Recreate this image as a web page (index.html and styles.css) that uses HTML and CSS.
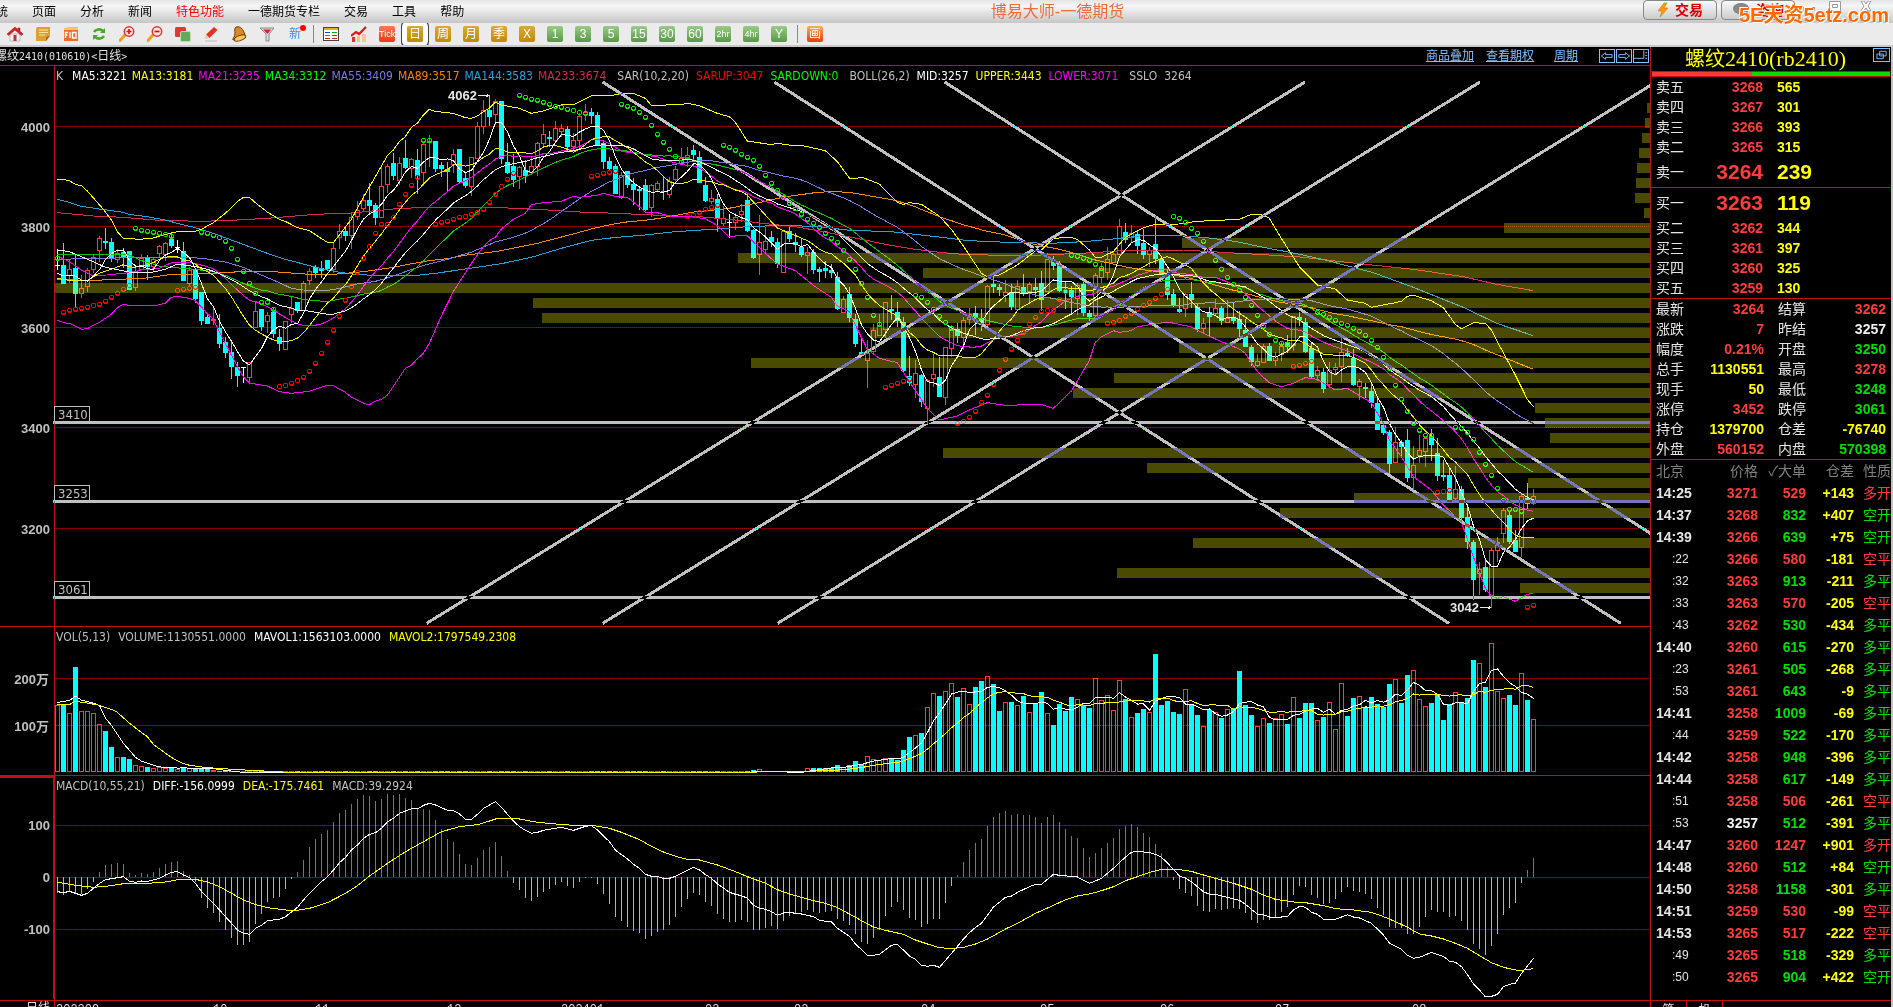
FILE: index.html
```html
<!DOCTYPE html>
<html lang="zh-CN">
<head>
<meta charset="utf-8">
<title>博易大师-一德期货</title>
<link rel="stylesheet" href="styles.css">
</head>
<body>
<header class="menubar">
  <nav class="menu">
    <a href="#">系统</a><a href="#">页面</a><a href="#">分析</a><a href="#">新闻</a><a href="#" class="hot">特色功能</a><a href="#">一德期货专栏</a><a href="#">交易</a><a href="#">工具</a><a href="#">帮助</a>
  </nav>
  <h1 class="app-title">博易大师-一德期货</h1>
  <div class="window-tools">
    <button class="pill"><svg width="12" height="16" viewBox="0 0 12 16"><path d="M7 1 1 9h4l-2 6 8-9H7l3-5z" fill="#f90" stroke="#c97a10" stroke-width=".6"/></svg>交易</button>
    <button class="pill"><svg width="18" height="16" viewBox="0 0 18 16"><path d="M9 1C4 1 1 3.500 1 6.500S4 12 8 12l4 3-1-3c3.500-.5 6-2.500 6-5.500S14 1 9 1z" fill="#888"/></svg>咨询</button>
    <svg class="winbtns" width="80" height="12" viewBox="0 0 80 12" fill="#fff" stroke="#999"><rect x="4.500" y="6.500" width="11" height="3"/><path d="M30.500.5h11v9h-11zM33.500 3.500h5v3h-5z" fill-rule="evenodd"/><path d="M62 0h3l2 3 2-3h3l-3 5 3 5h-3l-2-3-2 3h-3l3-5z"/></svg>
  </div>
  <span class="watermark">5E天资5etz.com</span>
</header>

<div class="toolbar">
  <button class="tool" aria-label="主页"><svg viewBox="0 0 16 16"><path d="M3 8h10v7H3z" fill="#f4f4f4" stroke="#999" stroke-width=".6"/><path d="M8 1 0 8l1.500 1.500L8 4l6.500 5.500L16 8l-3-2.700V2h-2v1.500z" fill="#d22" stroke="#811" stroke-width=".5"/><path d="M6.500 9h3v6h-3z" fill="#b33"/></svg></button>
  <button class="tool" aria-label="公告"><svg viewBox="0 0 16 16"><path d="M2 1h13v9l-4 5H1V3z" fill="#e0a030"/><path d="M11 15v-4l4-1z" fill="#a86a10"/><path d="M4 4h9M4 6.500h9M4 9h6" stroke="#fbe3ae"/></svg></button>
  <button class="tool" aria-label="F10"><svg viewBox="0 0 16 16"><path d="M1 2l14-1v14H1z" fill="#f06a28"/><path d="M1 2l14-1v3H1z" fill="#f7c27a"/><path d="M2.500 12V6.500H5M2.500 9h2M7 6v6M9.500 6.500h3.500v5.500H9.500z" fill="none" stroke="#fff" stroke-width="1.400"/></svg></button>
  <button class="tool" aria-label="刷新"><svg viewBox="0 0 16 16" fill="none" stroke="#4aa62c" stroke-width="2.600"><path d="M3 6c2-3 6-3.500 9-1M13 10c-2 3-6 3.500-9 1"/><path d="M14 2v5H9zM2 14V9h5z" fill="#4aa62c" stroke="none"/></svg></button>
  <button class="tool" aria-label="放大"><svg viewBox="0 0 16 16"><path d="M1 14.500 6 9" stroke="#f0a020" stroke-width="3" stroke-linecap="round"/><circle cx="10" cy="5.500" r="4.700" fill="#ffe6e6" stroke="#d33" stroke-width="1.500"/><path d="M7.500 5.500h5M10 3v5" stroke="#d11" stroke-width="1.700"/></svg></button>
  <button class="tool" aria-label="缩小"><svg viewBox="0 0 16 16"><path d="M1 14.500 6 9" stroke="#f0a020" stroke-width="3" stroke-linecap="round"/><circle cx="10" cy="5.500" r="4.700" fill="#ffe6e6" stroke="#d33" stroke-width="1.500"/><path d="M7.500 5.500h5" stroke="#d11" stroke-width="1.700"/></svg></button>
  <button class="tool" aria-label="叠加"><svg viewBox="0 0 16 16"><rect x="0" y="1" width="11" height="10" rx="1.500" fill="#dc3a30"/><rect x="5.500" y="5.500" width="10" height="10" rx="1.500" fill="#62ab5a" stroke="#b9dcb4"/></svg></button>
  <button class="tool" aria-label="画线"><svg viewBox="0 0 16 16"><path d="M3 8.500 11 1l3.500 3L6.500 12z" fill="#e63222"/><path d="M3 8.500 6.500 12 1.500 13z" fill="#f2c79a"/><path d="M2 15h12" stroke="#bbb"/></svg></button>
  <button class="tool" aria-label="预警"><svg viewBox="0 0 16 16"><path d="M5 1c5-1 7 2 9 8L2 14c-1-1 2-3 2-7 0-2-1-4 1-6z" fill="#d9892b" stroke="#6e3a0a"/><ellipse cx="9" cy="12" rx="6" ry="2.500" transform="rotate(-20 9 12)" fill="#f7c94e" stroke="#6e3a0a"/></svg></button>
  <button class="tool" aria-label="筛选"><svg viewBox="0 0 16 16"><path d="M1 2h14l-5 6v7H7V8z" fill="#ddd" stroke="#888"/><path d="M4 3.500h8L9 7.500H8z" fill="#e01f2c"/></svg></button>
  <button class="tool news">新</button>
  <span class="sep"></span>
  <button class="tool" aria-label="报价"><svg viewBox="0 0 16 16"><rect x=".5" y="1.500" width="15" height="13" fill="#fff" stroke="#444"/><path d="M1 3h14" stroke="#e8b020" stroke-width="2"/><path d="M2 6.500h5" stroke="#15a" /><path d="M9 6.500h5M2 9.500h5" stroke="#1a1"/><path d="M9 9.500h5M2 12.500h5M9 12.500h5" stroke="#c22"/></svg></button>
  <button class="tool" aria-label="走势"><svg viewBox="0 0 16 16"><path d="M1 11h3v5H1z" fill="#d33"/><path d="M6 10h3v6H6z" fill="#e8d070"/><path d="M11 8h4v8h-4z" fill="#f0c8a0"/><path d="M0 10l5-4 3 2 7-7" stroke="#e01818" stroke-width="2.200" fill="none"/></svg></button>
  <button class="tool key k-red">Tick</button>
  <button class="tool key k-gold on">日</button>
  <button class="tool key k-gold">周</button>
  <button class="tool key k-gold">月</button>
  <button class="tool key k-gold">季</button>
  <button class="tool key k-gold">X</button>
  <button class="tool key k-green">1</button>
  <button class="tool key k-green">3</button>
  <button class="tool key k-green">5</button>
  <button class="tool key k-green">15</button>
  <button class="tool key k-green">30</button>
  <button class="tool key k-green">60</button>
  <button class="tool key k-green small">2hr</button>
  <button class="tool key k-green small">4hr</button>
  <button class="tool key k-green">Y</button>
  <span class="sep"></span>
  <button class="tool key k-orange">画</button>
</div>

<main class="workspace">
  <section class="charts">
    <div class="chart-head">
      <h2 class="contract">螺纹<span class="mono">2410(010610)&lt;</span>日线<span class="mono">&gt;</span></h2>
      <a href="#">商品叠加</a><a href="#">查看期权</a><a href="#" class="gap">周期</a>
      <div class="navs">
        <button aria-label="向左"><svg viewBox="0 0 15 12"><path d="M1.500 6 6 2.500v2h7v3H6v2z"/></svg></button>
        <button aria-label="向右"><svg viewBox="0 0 15 12"><path d="M13.500 6 9 2.500v2H2v3h7v2z"/></svg></button>
        <button aria-label="分栏"><svg viewBox="0 0 15 12"><path d="M0 8.500h10.500V0M12 2.500h2M12 5.500h2M12 8.500h2"/></svg></button>
      </div>
    </div>
    <div class="panel price">
      <svg id="price"></svg>
      <p class="legend"><span>K</span><span class="white l2">MA5:3221</span><span class="yellow">MA13:3181</span><span class="magenta">MA21:3235</span><span class="green">MA34:3312</span><span class="blue">MA55:3409</span><span class="orange">MA89:3517</span><span class="sky">MA144:3583</span><span class="crimson">MA233:3674</span><span class="l2">SAR(10,2,20)</span><span class="red">SARUP:3047</span><span class="green">SARDOWN:0</span><span class="l2">BOLL(26,2)</span><span class="white">MID:3257</span><span class="yellow">UPPER:3443</span><span class="magenta">LOWER:3071</span><span class="l2">SSLO</span><span>3264</span></p>
    </div>
    <div class="panel">
      <svg id="volume"></svg>
      <p class="legend"><span>VOL(5,13)</span><span>VOLUME:1130551.0000</span><span class="white">MAVOL1:1563103.0000</span><span class="yellow">MAVOL2:1797549.2308</span></p>
    </div>
    <div class="panel">
      <svg id="macd"></svg>
      <p class="legend"><span>MACD(10,55,21)</span><span class="white">DIFF:-156.0999</span><span class="yellow">DEA:-175.7461</span><span>MACD:39.2924</span></p>
    </div>
    <div class="panel"><svg id="dates"></svg></div>
  </section>

  <aside class="quote">
    <header class="quote-head"><h2>螺纹<span>2410(rb2410)</span></h2>
      <button aria-label="还原"><svg viewBox="0 0 15 13"><path d="M5.500 2.500h7v5h-7zM2.500 5.500h7v5h-7z"/></svg></button>
    </header>
    <div class="ratio"><i></i></div>
    <table class="book" id="asks"></table>
    <table class="book" id="bids"></table>
    <table class="stats" id="stats"></table>
    <table class="ticks"><thead><tr><th class="t">北京</th><th>价格</th><th>✓大单</th><th>仓差</th><th>性质</th></tr></thead><tbody id="ticks"></tbody></table>
    <div class="tabs"><button>笔</button><button>机</button></div>
  </aside>
</main>
<script src="chart.js"></script>
</body>
</html>
```
FILE: styles.css
```css
* { box-sizing: border-box; }
:root {
  --line: #c01010;
  --cjk: "Liberation Sans", "Noto Sans CJK SC", sans-serif;
}
body {
  margin: 0;
  height: 100vh;
  overflow: hidden;
  display: flex;
  flex-direction: column;
  background: #000;
  color: #c0c0c0;
  font: 12px/16px var(--cjk);
}
button { border: 0; padding: 0; margin: 0; background: none; color: inherit; font: inherit; }
h1, h2, p { margin: 0; font-weight: normal; }
table { border-collapse: collapse; width: 100%; table-layout: fixed; }
td, th { padding: 0; font-weight: normal; white-space: nowrap; }
a { color: inherit; }

.menubar {
  position: relative;
  flex: none;
  height: 23px;
  display: grid;
  grid-template-columns: 1fr auto 1fr;
  align-items: center;
  background: linear-gradient(#e4e4e4, #f6f6f6 25%, #e0e0e0 60%, #c6c6c6);
  color: #000;
}
.menu { display: flex; gap: 24px; margin-left: -16px; }
.menu a { text-decoration: none; white-space: nowrap; }
.menu .hot { color: #f00; }
.app-title { color: #f26a3c; font-size: 16px; padding-left: 222px; }
.window-tools { display: flex; justify-content: flex-end; gap: 4px; align-self: start; }
.pill {
  display: flex; align-items: center; justify-content: center; gap: 6px;
  width: 74px; height: 20px;
  border: 1px solid #888; border-radius: 4px;
  background: linear-gradient(#fafafa, #ccc);
  color: #d00; font-size: 14px; font-weight: bold;
}
.winbtns { margin: 1px 14px 0 0; }
.watermark {
  position: absolute; right: 4px; top: 3px;
  font-size: 20px; line-height: 24px; font-weight: bold; color: #ff6a00;
  text-shadow: 1px 1px 0 #fff, -1px -1px 0 #fff;
}

.toolbar {
  flex: none;
  height: 24px;
  display: flex;
  align-items: center;
  gap: 12px;
  padding-left: 7px;
  background: #ebebeb;
  border-bottom: 2px solid #c8c8c8;
}
.tool { width: 16px; height: 16px; flex: none; }
.tool svg { display: block; width: 16px; height: 16px; }
.news { position: relative; color: #3a8ee6; font-size: 12px; }
.news::after { content: ""; position: absolute; right: -3px; top: -1px; width: 6px; height: 6px; border-radius: 50%; background: #f00; }
.sep { width: 1px; height: 18px; background: #888; margin: 0 -3px 0 -2px; }
.key { border-radius: 2px; color: #fff; font-size: 12px; line-height: 16px; }
.k-gold { background: linear-gradient(#dca83c, #c08c00); }
.k-green { background: linear-gradient(#98cc84, #589848); }
.k-orange { background: linear-gradient(#ffb050, #e83818); }
.k-red { background: linear-gradient(#ff7a50, #e83a18); font-size: 9px; }
.small { font-size: 9px; }
.on { box-shadow: 0 0 0 5px #fff, 0 0 0 6px #444; clip-path: inset(-3px -6px); }

.workspace { flex: 1; min-height: 0; display: grid; grid-template-columns: minmax(0, 1fr) 243px; }
.charts { min-height: 0; display: grid; grid-template-rows: 18px 561fr 149fr 225fr 7px; }
.chart-head { display: flex; align-items: center; gap: 12px; color: #80c0ff; }
.contract { flex: 1; font-size: 12px; color: #e0e0e0; margin-left: -5px; }
.mono { font: 10px "DejaVu Sans Mono", monospace; }
.chart-head .gap { margin: 0 9px 0 8px; }
.navs { display: flex; gap: 1px; margin-right: 1px; }
.navs button { width: 16px; height: 14px; border: 1px solid #80c0ff; }
.navs svg, .quote-head svg { display: block; width: 100%; height: 100%; fill: none; stroke: #80c0ff; }

.panel { min-height: 0; display: grid; grid-template: minmax(0, 1fr) / minmax(0, 1fr); border-top: 1px solid var(--line); overflow: hidden; }
.panel > * { grid-area: 1 / 1; }
.panel svg { width: 100%; height: 100%; display: block; }
.legend {
  align-self: start; display: flex; gap: 8px; padding: 2px 0 0 56px;
  font: 12px/16px "DejaVu Sans Condensed", "DejaVu Sans", sans-serif; white-space: nowrap;
}
.price .legend { gap: 5px; }
.l2 { margin-left: 4px; }
.crimson ~ span { margin-left: 2px; }
.crimson ~ .l2 { margin-left: 6px; }
.white { color: #fff; }
.yellow { color: #ff0; }
.magenta { color: #f0f; }
.green { color: #0f0; }
.blue { color: #7878e8; }
.orange { color: #ff8000; }
.sky { color: #28a0dc; }
.crimson { color: #dc2850; }
.red { color: #f00; }
.panel text { font: 13px "DejaVu Sans Condensed", sans-serif; fill: #c0c0c0; }
.panel text.b { font: bold 13px "Liberation Sans", "Noto Sans CJK SC", sans-serif; }
.panel text.peak { fill: #e8e8e8; }
.panel text.date { font: 12px "Liberation Mono", "Noto Sans CJK SC", monospace; fill: #e0e0e0; }

.quote { border-left: 1px solid var(--line); border-right: 2px solid #c8c0c0; display: flex; flex-direction: column; min-height: 0; overflow: hidden; color: #e4e4e4; font-size: 14px; line-height: 20px; }
.quote-head { height: 24px; display: flex; align-items: center; color: #ff0; }
.quote-head h2 { flex: 1; padding-left: 34px; font-size: 20px; line-height: 24px; }
.quote-head h2 span { font: 22px/24px "Liberation Serif", serif; }
.quote-head button { width: 17px; height: 14px; margin: 0 1px 8px 0; border: 1px solid #80c0ff; }
.ratio { flex: none; height: 6px; border: solid var(--line); border-width: 1px 0; padding: 0 1px; background: #00dc00; background-clip: content-box; }
.ratio i { display: block; height: 4px; width: 42%; background: #ff3838; }
.book, .stats { border-bottom: 1px solid var(--line); flex: none; }
tr { height: 20px; }
tr.big { height: 30px; }
td:first-child { padding-left: 5px; width: 38px; }
.n { text-align: right; font-weight: bold; }
.book .n { width: 74px; }
.book .v { padding-left: 14px; font-weight: bold; }
.big .n, .big .v { font-size: 21px; }
.stats td.n { width: 75px; }
.stats td.m { padding-left: 14px; width: 48px; }
.stats td.n:last-child { width: auto; padding-right: 5px; }
.r { color: #ff3c3c; }
.g { color: #00e000; }
.y { color: #ff0; }
.w { color: #f0f0f0; }
.ticks { flex: none; }
.ticks th { text-align: right; color: #808080; height: 22px; }
.ticks th.t { text-align: left; padding-left: 5px; width: 47px; }
.ticks th:nth-child(2) { width: 60px; }
.ticks th:nth-child(3), .ticks th:nth-child(4) { width: 48px; }
.ticks tbody tr { height: 22px; }
.ticks td.t { font-weight: bold; }
.ticks td.s { font-size: 12px; padding-left: 21px; }
.ticks td:last-child { text-align: right; }
.tabs { margin-top: auto; flex: none; height: 7px; border-top: 1px solid var(--line); display: flex; overflow: hidden; font-size: 12px; line-height: 16px; }
.tabs button { width: 36px; height: 18px; border-right: 1px solid var(--line); }
```
FILE: chart.js
```js
// Geometry is kept in thirds of a pixel; one bar every 18 units.
const U = 3, STEP = 18, X0 = 172.5;
const bx = i => X0 + STEP * i;

// candle = direction, high, open/close top, open/close bottom, low
const candleTiles = [
 [0, `w568-616-616-630 d549-615-671-671 u598-628-645-669 d585-624-702-742 u645-685-700-713 u625-631-680-695 u585-592-628-640 u528-535-571-605 d504-543-548-566 d535-546-597-605 u568-580-598-608 d565-576-590-624 d573-573-690-690 u625-635-682-692 u583-595-628-628 d585-594-622-660 u590-597-620-635 u555-559-580-590 u545-550-583-602 d520-537-557-563 w541-562-562-578 d546-573-662-662 u620-631-670-680 d625-631-717-728 d697-697-782-795 d765-771-791-791 u738-778-781-795 d762-803-851-863 d832-846-878-893 d845-876-920-957 d905-921-947-980 w922-922-922-968 u906-906-951-968 u725-754-802-802 d747-747-800-812 u755-766-784-820 d740-755-821-833 d806-831-851-872 u784-784-868-868 u710-745-763-790 d726-726-752-758 u663-670-750-750 u625-634-661-675 d615-622-640-655 d603-625-632-653 d600-600-628-634 u547-565-628-638 u492-514-532-567 d500-513-528-543 u460-472-526-567 u424-452-470-480 u403-421-445-455 d370-420-437-463 d428-436-473-495 u318-379-472-472 u312-319-373-400 d280-309-347-360 u291-310-362-375 d240-294-323-328 u295-298-325-353 d267-300-347-402 u247-253-337-377 u225-243-248-320 d243-243-326-335 d305-315-327-350 d307-328-335-393 u268-283-312-340 d267-267-366-368 d335-354-377-383 u292-292-379-407 u186-199-295-295 u120-151-199-221 d105-150-170-198 u118-124-163-195 d123-123-297-312 d250-307-339-343 d282-318-359-380 u318-322-350-386 d300-331-347-369 u292-319-337-345 u245-250-320-348 u192-223-250-262 d212-231-236-262 u183-205-241-247 u192-205-214-230 d198-207-261-272 u220-241-259-270 u160-169-241-267 u131-158-162-183 d144-156-167-193 d156-165-255-258 d245-248-305-327 d291-303-327-332 d312-318-402-402 u336-346-412-418 d333-333-376-383 d355-372-390-434 d377-388-392-450 d357-375-450-453 u372-376-442-470 u362-370-388-395 d350-393-396-420 u352-364-402-413 u318-328-358-364 u264-295-300-312 u262-286-291-320 d255-270-285-300 d273-291-369-369 d350-375-423-426 u390-415-423-432 d403-416-478-516 u438-475-490-498 w462-485-485-534 u460-472-486-511 u433-454-463-485 d400-420-513-517 d508-511-594-597 u465-547-583-645 u502-544-569-580 d513-531-546-560 d535-545-611-623 u513-513-637-637 d498-513-537-547 d520-546-554-576 d535-562-584-592 u560-577-586-642 d566-577-629-641 d622-627-636-666 d603-625-633-655 d612-630-639-655 d636-651-746-750 u708-718-758-758 d682-703-773-785 d762-777-851-860 d835-877-886-886 u840-880-901-983 u793-810-875-885 u763-797-827-827 u727-727-808-835 d705-747-752-780 d726-756-782-800 d770-786-932-935`],
 [300, `d588-648-668-677 u600-640-673-713 d641-645-727-740 u656-661-745-793 u582-643-656-680 d591-651-711-711 u562-562-712-735 u495-508-565-592 d490-507-527-548 u472-481-532-570 u445-462-478-495 d438-459-475-525 d447-475-492-512 u374-379-493-497 d348-372-380-400 d372-381-389-408 u360-396-407-425 d373-397-441-451 u360-379-448-448 d342-381-402-408 u365-373-394-433 d353-381-389-410 d333-369-420-453 u279-298-394-394 d288-303-318-330 d302-315-393-395 d364-390-400-447 d378-390-411-462 u370-375-415-466 d363-373-459-467 d450-460-470-485 u340-346-466-470 u310-326-352-368 u261-298-337-360 u275-283-307-310 u177-198-283-283 d189-216-240-250 u194-220-233-248 d210-222-258-283 d207-249-285-297 u262-270-283-320 d168-252-297-313 d290-297-345-345 d330-345-405-420 d388-402-435-440 d413-447-456-458 u400-403-445-470 d367-402-420-443 d430-441-507-516 u475-490-506-518 d442-456-471-528 u418-445-460-465 d438-444-483-495 u420-475-487-487 d430-474-483-493 d453-477-507-537 d478-510-560-560 d556-561-605-617 u583-604-617-620 u552-559-608-608 d550-558-602-602 u575-588-601-618 u545-558-582-603 d525-545-560-578 u470-470-556-572 d457-471-479-498 d475-486-576-579 d550-564-650-654 u618-631-645-663 d625-636-686-698 u605-632-674-685 u608-622-629-645 u533-577-620-665 d565-578-586-592 d568-594-675-677 u657-664-680-720 d670-682-686-715 d670-694-728-743`],
 [600, `d412-430-510-510 d485-496-519-526 d510-516-612-643 u500-547-608-608 d540-546-560-595 d508-540-653-665 u558-616-653-690 u525-571-586-608 u530-535-574-620 d507-527-555-602 d535-580-648-662 d600-646-651-663 d620-645-726-726 u618-688-716-720 d678-687-773-783 d735-771-845-867 d840-846-960-1020 u905-928-941-1005 d900-922-990-995 u865-871-1006-1043 u832-847-872-905 u743-751-821-848 d755-765-846-853 d810-840-876-876 u700-709-862-890 d668-714-731-747 u687-709-731-735`]
];
const candles = candleTiles.flatMap(([dy, s]) => s.split(" ").map(t => {
  const [h, a, b, l] = t.slice(1).split("-").map(n => +n + dy);
  return { d: t[0], h, a, b, l, c: t[0] === "u" ? a : t[0] === "d" ? b : a };
}));
const closes = candles.map(c => c.c);

const sma = (v, n) => v.map((_, i) => i < n - 1 ? null : v.slice(i - n + 1, i + 1).reduce((s, x) => s + x, 0) / n);
const line = (head, vals, color) =>
  `<polyline points="${head} ${vals.map((v, i) => v === null ? "" : `${bx(i)},${v.toFixed(1)}`).join(" ")}" stroke="${color}"/>`;

const upper = "172,360 190,358 208,362 228,374 245,377 262,393 310,448 334,480 352,515 370,535 420,538 460,534 496,523 532,515 586,514 604,508 640,488 676,460 712,425 730,412 748,412 766,428 802,456 838,478 856,484 892,503 928,512 982,547 1000,548 1018,525 1054,478 1090,412 1126,350 1162,287 1180,270 1198,245 1216,230 1234,202 1252,190 1270,165 1288,148 1306,154 1360,160 1396,173 1414,175 1432,168 1450,155 1468,145 1486,127 1504,135 1558,145 1594,160 1630,153 1684,135 1720,134 1774,107 1830,107 1864,102 1900,100 1936,115 1954,136 2044,134 2062,130 2098,137 2152,160 2188,170 2206,187 2242,243 2314,254 2332,250 2386,258 2404,256 2440,264 2476,272 2512,305 2548,354 2566,357 2584,351 2638,372 2692,427 2710,433 2728,428 2764,433 2818,468 2854,508 2890,558 2944,640 2962,650 2998,645 3052,615 3106,573 3124,570 3160,535 3214,532 3232,538 3268,570 3286,592 3304,592 3340,575 3376,532 3430,503 3466,493 3538,492 3590,484 3718,478 3754,463 3790,465 3808,475 3844,535 3898,620 3952,675 4006,687 4042,720 4096,730 4114,742 4186,728 4204,724 4222,709 4240,706 4294,722 4330,743 4366,793 4384,806 4420,788 4456,790 4474,810 4492,845 4546,945 4582,1018 4600,1040";
const lower = "172,781 190,788 208,790 226,798 244,808 262,806 280,796 298,787 334,763 352,743 370,733 388,736 470,736 496,730 514,712 532,709 568,715 586,722 604,740 622,762 640,778 658,815 676,850 694,885 712,920 730,950 748,969 802,978 838,995 874,1000 928,994 982,976 1000,976 1018,988 1036,997 1054,1012 1090,1030 1108,1034 1126,1024 1144,1018 1162,1006 1216,925 1234,916 1252,896 1270,880 1288,850 1324,768 1360,695 1414,610 1450,560 1468,542 1486,532 1504,507 1540,478 1576,460 1594,434 1630,428 1684,424 1720,409 1738,412 1792,406 1810,400 1846,409 1882,412 1918,440 1936,457 1972,458 2008,468 2062,469 2116,476 2152,497 2188,531 2224,525 2242,527 2260,545 2296,580 2332,612 2386,632 2440,676 2494,712 2512,738 2548,755 2566,795 2602,868 2638,895 2692,908 2728,965 2782,1045 2818,1080 2872,1068 2908,1050 2962,1028 3016,1036 3124,1033 3160,1045 3214,993 3268,902 3286,847 3304,830 3340,812 3358,817 3394,812 3412,800 3502,786 3538,793 3574,801 3610,820 3664,845 3718,867 3736,880 3772,935 3808,968 3844,980 3880,970 3916,953 3952,958 4006,990 4042,985 4114,1028 4150,1090 4168,1140 4204,1190 4240,1250 4294,1290 4330,1335 4384,1385 4420,1490 4456,1585 4474,1608 4492,1615 4510,1610 4546,1624 4582,1603 4600,1600";
const lines = [
  line("172,458 280,468 370,472 478,481 604,484 694,481 800,475 946,463 1054,459 1180,447 1270,442 1480,442 1610,448 1740,456 1850,460 1936,464 2026,468 2110,471 2206,480 2296,491 2386,500 2476,516 2566,534 2656,553 2746,568 2818,577 2890,583 3000,586 3130,585 3280,578 3400,570 3550,570 3650,576 3790,584 3900,591 4050,608 4240,628 4390,650 4490,673 4600,692", [], "#dc2850"),
  line("172,418 208,427 244,439 298,447 370,457 388,463 440,470 496,480 532,490 586,503 640,520 694,540 748,560 802,580 856,598 910,612 960,625 1018,637 1072,644 1126,646 1252,646 1306,640 1410,625 1504,611 1594,592 1684,565 1774,541 1840,533 1936,525 2026,515 2152,507 2242,500 2350,496 2458,500 2548,511 2674,515 2818,531 2890,540 2960,545 3150,550 3250,545 3350,536 3430,527 3540,527 3620,533 3710,545 3790,562 3900,583 3975,600 4120,638 4240,682 4390,742 4490,790 4600,827", [], "#28a0dc"),
  line("172,658 262,662 352,658 430,655 500,645 640,640 720,635 820,635 928,643 1000,643 1072,637 1126,630 1180,622 1230,612 1288,602 1342,596 1400,585 1486,575 1612,550 1700,527 1745,515", sma(closes, 89), "#f80"),
  line("172,600 240,595 568,592 622,597 676,606 730,622 784,645 838,668 874,685 910,690 980,692 1018,685 1072,672 1126,664", sma(closes, 55), "#7878e8"),
  line("172,585 244,583 388,585 424,602 478,618 514,622 586,628 640,635 680,648 730,670", sma(closes, 34), "#0c0"),
  line("172,588 208,605 244,630 280,648 320,645 388,638 424,630 478,625 514,608", sma(closes, 21), "#f0f"),
  line("172,655 200,660 262,662 298,640 334,628 370,614", sma(closes, 13), "#ee0"),
  line(upper, [], "#ff0"),
  line(lower, [], "#f0f"),
  line("172,570 208,575 244,590 280,605 316,622 388,636 460,636 496,628 532,612 586,620", sma(closes, 26), "#eee"),
  line("172,640 190,648 208,645 226,648", sma(closes, 5), "#fff")
].join("");

const sar = [
 ["g",0,"595"],["r",1,"757,751,748,745,742,737,733,724,712,700,688,677"],["g",13,"505,511,514,517,520,524,529"],["r",20,"692,688,685,682"],
 ["g",24,"517,520,526,533,544,565,598,634,670,700,727,727,748"],["r",37,"980,977,970,962,952,934,910,880,847,811,769,721,680,637,595,560,520,493,493,472,433,403,376,352"],
 ["g",61,"241,241"],["r",63,"493,487,484,478,472,470,463,457,448,427,403,380,358,340"],["g",77,"106,112,118,121,127,133,139,142,148,152,158,160"],
 ["r",89,"349,346,340,337,334"],["g",94,"133,139,145,157,172,196,223,247,268,290,306"],["r",105,"469,467,457,448,442,436"],
 ["g",111,"256,262,271,283,292,301,319,346,370,391,412,430,447,463,478,490,502,520,535,547,571,598,628,670,712,766,793"],["r",138,"982,976,970,964,958"],
 ["g",143,"706,712,727,748,769,787,805"],["r",150,"1090,1085,1072,1054,1027,1006,973,931,898,868,841,817,793,772,754,752,751,718,695"],
 ["g",169,"586,589,595,601,613,625"],["r",175,"790,787,782,769,760,748,736,727,715,703,688"],
 ["g",186,"470,475,487,505,520,544,571,601,628,652,673,691,712,736,766,799,823,841,850,853"],["r",206,"919,916,910,904"],
 ["g",210,"757,763,772,781,790,796,805,814,826,841,862,892,925,976,1018,1054,1090,1111,1126,1126"],["r",230,"1297,1295,1291"],
 ["g",233,"1102,1105,1117,1138,1177,1213,1246,1285,1321,1348,1348,1354"],["r",245,"1642,1636"]
].map(([c, i0, s]) => s.split(",").map((y, k) => `<circle cx="${bx(i0 + k)}" cy="${y}" r="6" stroke="${c === "g" ? "#0e0" : "#f00"}"/>`).join("")).join("");

const candleMarks = candles.map((c, i) => {
  const x = bx(i);
  if (c.d === "w") return `<path d="M${x} ${c.h}V${c.l}M${x - 7.5} ${c.a + 1}h15" stroke="#fff"/>`;
  if (c.d === "d") return `<path d="M${x} ${c.h}V${c.l}" stroke="#0ff"/><rect x="${x - 7.5}" y="${c.a}" width="15" height="${Math.max(3, c.b - c.a)}" fill="#0ff"/>`;
  return `<path d="M${x} ${c.h}V${c.a}M${x} ${c.b}V${c.l}M${x - 6} ${c.a}h12V${c.b}h-12z" stroke="#ff3c3c"/>`;
}).join("");

// volume profile: top, left edge
const profile = [[129,4941],[174,4935],[219,4926],[264,4917],[309,4911],[354,4908],[399,4905],[444,4932],[489,4512],[534,3546],[579,2214],[624,2769],[669,165],[714,1599],[759,1626],[804,2610],[849,3537],[894,2253],[939,3342],[984,3219],[1029,4605],[1074,4635],[1119,4650],[1164,2829],[1209,3441],[1254,4584],[1299,4062],[1344,3840],[1434,3578],[1524,3350],[1569,4560]]
  .map(([y, x]) => `<rect x="${x}" y="${y}" width="${4950 - x}" height="30"/>`).join("");

const trends = [[1808,66,4347,1690],[2323,66,4862,1690],[2834,66,5373,1690],[1280,1690,3915,66],[1808,1690,4440,66],[2333,1690,4968,66],
  [160,1087.5,4950,1087.5],[160,1324.5,4950,1324.5],[160,1612.5,4950,1612.5]]
  .map(([a, b, c, d]) => `<path class="trend" d="M${a} ${b}L${c} ${d}" style="mix-blend-mode:difference"/>`).join("");

// volume bar tops; baseline 455
const volTops = "254 254 280 141 274 274 280 313 333 381 412 412 418 436 439 441 445 442 443 443 448 443 444 443 447 446 449".split(" ").map(Number);
while (volTops.length < 116) volTops.push(453);
volTops.push(...`450 446 452 452 452 452 452 452 452 443 444 444 444 444 435 442 435 423 432 409 418 421 413 414 419 390 351 346 339 260 218 228 214 190 231 203 253 201 183 169 192 273 247 246 256 228 277 250 216 280 316 252 273 231 236 255 263 175 240 224 271 181 238 292 279 267 277 102 255 243 276 282 206 254 285 319 270 277 294 266 265 153 255 285 317 293 310 294 282 312 230 294 250 250 301 291 245 328 190 289 234 229 262 231 252 260 192 178 250 166 151 236 257 249 222 300 252 217 250 234 121 130 201 70 213 233 225 255 160 240 298`.split(" ").map(Number));
const volBars = volTops.map((y, i) => {
  const x = bx(i), down = candles[i] && candles[i].d === "d";
  if (y > 451) return `<rect x="${x - 7.5}" y="453" width="15" height="3" fill="${down ? "#0ff" : "#ff3c3c"}"/>`;
  return down ? `<rect x="${x - 7.5}" y="${y}" width="15" height="${456 - y}" fill="#0ff"/>`
    : `<path d="M${x - 6} ${y + 1}h12V454.500h-12z" stroke="#ff3c3c"/>`;
}).join("");
const volValues = volTops.map(y => y > 451 ? 457 : y);
const volLines = line("172,248 190,244 208,242 226,228", sma(volValues, 5), "#fff")
  + line("172,254 208,254 226,244 262,249 298,256 334,268 352,277", sma(volValues, 13), "#ff0");

// MACD histogram tips; zero line at 772
const hist = `819 824 815 820 822 807 786 756 735 732 729 732 759 765 759 762 756 744 732 726 723 753 766 786 834 863 879 906 930 954 975 975 966 912 882 846 833 831 807 777 756 720 681 657 642 630 606 579 570 552 537 525 528 543 537 522 525 522 533 541 567 567 570 600 627 657 666 702 732 735 714 690 681 666 708 753 789 810 833 843 831 816 807 795 786 798 804 786 774 774 791 822 852 890 903 921 933 939 957 948 936 930 915 890 861 837 819 826 846 858 882 896 905 905 899 905 930 930 924 917 927 903 888 878 876 870 876 879 876 873 896 903 915 942 965 971 953 930 888 860 846 869 893 900 920 911 896 896 849 797 766 726 690 669 657 618 591 579 573 585 582 585 585 591 609 591 585 606 627 648 654 684 711 699 684 669 654 627 618 612 621 639 651 672 699 740 780 807 819 828 858 873 876 867 870 867 863 867 879 900 909 901 899 890 876 860 825 797 801 825 833 852 849 837 816 801 812 817 822 836 864 885 921 923 924 942 942 921 890 870 876 876 890 887 903 930 971 986 1004 978 942 884 864 849 789 750 714`.split(" ")
  .map((y, i) => `<path d="M${bx(i)} 772V${y}" stroke="${y < 772 ? "#ff3c3c" : "#0ff"}"/>`).join("");
const curve = (s, c) => `<polyline stroke="${c}" points="${s.split(" ").map(p => { const [i, y] = p.split(","); return bx(+i) + "," + y; }).join(" ")}"/>`;
const diff = curve("0,815 1,818 2,814 4,826 5,820 7,790 8,779 11,770 12,784 13,787 14,783 15,784 17,775 18,765 19,757 20,755 21,765 22,773 23,790 24,815 26,850 28,890 30,930 31,940 32,943 33,925 34,916 35,902 37,898 38,890 40,862 41,840 42,820 44,785 45,770 46,750 47,728 48,712 49,690 50,675 51,655 52,643 53,638 54,625 55,605 56,595 57,580 59,566 60,567 61,556 62,550 63,555 65,571 66,572 67,582 68,598 69,598 70,583 71,565 73,545 74,562 75,583 76,603 77,620 78,631 79,640 80,637 81,631 84,622 86,631 88,619 89,617 90,630 91,648 92,665 93,691 95,717 96,733 97,745 98,763 99,769 100,770 101,775 102,775 103,769 105,751 106,742 107,750 108,764 109,775 110,792 111,804 112,817 113,823 114,827 115,835 116,856 117,865 118,868 119,875 120,886 121,879 122,877 123,880 124,882 126,890 127,901 129,906 130,925 132,949 133,972 135,1006 136,1006 137,1003 138,989 139,976 140,973 142,1008 143,1018 144,1036 145,1039 146,1036 147,1042 149,1000 151,957 152,938 153,922 154,910 156,861 158,832 159,828 160,817 162,800 163,793 164,793 166,763 167,766 170,771 171,781 172,790 174,775 176,745 178,711 179,697 180,694 182,698 183,703 184,712 185,729 187,768 188,775 189,785 191,815 192,823 193,823 195,832 197,841 198,853 200,883 201,884 202,891 204,891 205,889 206,870 207,859 208,862 209,877 210,883 211,898 213,898 215,884 216,891 217,894 219,910 221,945 222,970 224,988 225,1006 226,1015 227,1012 229,997 230,1004 231,1009 232,1024 233,1027 234,1040 235,1064 236,1092 237,1110 238,1131 239,1129 240,1123 241,1100 242,1093 243,1089 244,1060 245,1038 246,1015", "#fff");
const dea = curve("0,787 2,793 4,798 6,802 9,797 11,791 15,790 18,786 20,779 23,778 25,786 27,800 29,820 31,840 33,854 35,863 38,870 40,871 42,865 45,848 48,820 50,797 52,768 55,730 58,695 61,665 64,635 67,620 70,614 72,603 73,597 75,595 77,597 80,607 83,612 86,616 89,616 92,625 94,637 97,659 99,679 101,696 103,709 105,718 107,720 110,735 113,755 115,770 118,790 120,809 122,822 124,832 126,842 128,850 130,863 132,882 134,902 136,921 138,931 141,943 143,960 145,972 147,983 149,986 151,982 153,972 155,957 158,927 160,910 163,880 166,856 168,839 170,828 172,822 174,812 176,800 178,782 180,770 182,757 184,748 187,749 189,754 190,760 193,775 196,790 199,808 201,825 203,838 206,846 208,848 211,857 213,866 216,870 219,877 221,890 223,905 225,922 227,942 229,948 231,957 233,970 235,985 237,1007 239,1028 241,1042 243,1050 244,1051 246,1046", "#ff0");

const grid = ys => ys.map(y => `<path d="M168 ${y}H4950" stroke="#a00000" stroke-dasharray="3 3"/>`).join("");
const axisLine = `<path d="M163.500 0V3000" stroke="#c01010"/>`;

// Draws one panel: shapes scale with it, text only moves with it.
function draw(id, top, height, shapes, texts) {
  const el = document.getElementById(id), box = el.getBoundingClientRect();
  const sx = box.width / 1650, sy = box.height / height;
  el.innerHTML = `<g transform="scale(${sx / U} ${sy / U}) translate(0 ${-top})" fill="none" stroke-width="3" shape-rendering="crispEdges">${axisLine}${shapes}</g>` +
    texts.map(([x, y, s, cls, anchor]) => `<text x="${x / U * sx}" y="${(y - top) / U * sy + 5}" class="${cls}" text-anchor="${anchor || "start"}">${s}</text>`).join("");
}
function drawAll() {
  const tags = [1087, 1324, 1612].map(y => `<path d="M163.500 ${y - 47.500}h105v44h-105z" stroke="#c0c0c0" fill="#000"/>`).join("");
  draw("price", 18, 560,
    grid([200.5, 500.5, 803.5, 1103.5, 1406.5]) + candleMarks + lines + sar +
    `<g fill="#ff0" fill-opacity=".29">${profile}</g><g stroke="#c0c0c0" stroke-width="9" style="mix-blend-mode:difference">${trends}</g>${tags}` +
    `<path d="M1434 106h32m-6 -5l6 5l-6 5M4440 1642h32m-6 -5l6 5l-6 5" stroke="#e8e8e8"/>`,
    [[150, 200, "4000", "b", "end"], [150, 500, "3800", "b", "end"], [150, 803, "3600", "b", "end"], [150, 1103, "3400", "b", "end"], [150, 1406, "3200", "b", "end"],
     [174, 1063, "3410", ""], [174, 1300, "3253", ""], [174, 1588, "3061", ""], [1344, 106, "4062", "b peak"], [4350, 1642, "3042", "b peak"]]);
  draw("volume", 21, 148, grid([175.5, 316.5]) + volBars + volLines,
    [[147, 177, "200万", "b", "end"], [147, 318, "100万", "b", "end"]]);
  draw("macd", 468, 224, `<path d="M0 470H160.500V1138" stroke="#c01010" stroke-width="6"/>` + grid([616.5, 772.5, 928.5]) + hist + dea + diff,
    [[150, 616, "100", "b", "end"], [150, 772, "0", "b", "end"], [150, 928, "-100", "b", "end"]]);
  draw("dates", 0, 6, "", [[150, 18, "日线", "date", "end"]].concat(
    [[168, "202309"], [639, "10"], [945, "11"], [1341, "12"], [1683, "202401"], [2115, "02"], [2382, "03"], [2763, "04"], [3120, "05"], [3480, "06"], [3825, "07"], [4236, "08"]]
      .map(([x, s]) => [x, 21, s, "date"])));
}
drawAll();
addEventListener("resize", drawAll);

const td = (cls, s) => `<td class="${cls}">${s}</td>`;
const book = (id, rows, big) => document.getElementById(id).innerHTML = rows.map((r, i) =>
  `<tr class="${i === big ? "big" : ""}">${td("", r[0])}${td("n r", r[1])}${td("v y", r[2])}</tr>`).join("");
book("asks", [["卖五", 3268, 565], ["卖四", 3267, 301], ["卖三", 3266, 393], ["卖二", 3265, 315], ["卖一", 3264, 239]], 4);
book("bids", [["买一", 3263, 119], ["买二", 3262, 344], ["买三", 3261, 397], ["买四", 3260, 325], ["买五", 3259, 130]], 0);
document.getElementById("stats").innerHTML = [
  ["最新", "r", "3264", "结算", "r", "3262"], ["涨跌", "r", "7", "昨结", "w", "3257"], ["幅度", "r", "0.21%", "开盘", "g", "3250"],
  ["总手", "y", "1130551", "最高", "r", "3278"], ["现手", "y", "50", "最低", "g", "3248"], ["涨停", "r", "3452", "跌停", "g", "3061"],
  ["持仓", "y", "1379700", "仓差", "y", "-76740"], ["外盘", "r", "560152", "内盘", "g", "570398"]
].map(r => `<tr>${td("", r[0])}${td("n " + r[1], r[2])}${td("m", r[3])}${td("n " + r[4], r[5])}</tr>`).join("");
document.getElementById("ticks").innerHTML = `14:25 3271 529 +143 r多开|14:37 3268 832 +407 g空开|14:39 3266 639 +75 g空开|:22 3266 580 -181 r空平|:32 3263 913 -211 g多平|:33 3263 570 -205 r空平|:43 3262 530 -434 g多平|14:40 3260 615 -270 g多平|:23 3261 505 -268 g多平|:53 3261 643 -9 g多平|14:41 3258 1009 -69 g多平|:44 3259 522 -170 g多平|14:42 3258 948 -396 g多平|14:44 3258 617 -149 g多平|:51 3258 506 -261 r空平|:53 3257 512 -391 g多平|14:47 3260 1247 +901 r多开|14:48 3260 512 +84 g空开|14:50 3258 1158 -301 g多平|14:51 3259 530 -99 r空平|14:53 3265 517 -222 r空平|:49 3265 518 -329 g多平|:50 3265 904 +422 g空开`
  .split("|").map(s => {
    const [t, p, v, d, k] = s.split(" ");
    return `<tr>${td(t[0] === ":" ? "s" : "t", t)}${td("n " + (p === "3257" ? "w" : "r"), p)}${td("n " + k[0], v)}${td("n y", d)}${td(k[0], k.slice(1))}</tr>`;
  }).join("");
```
